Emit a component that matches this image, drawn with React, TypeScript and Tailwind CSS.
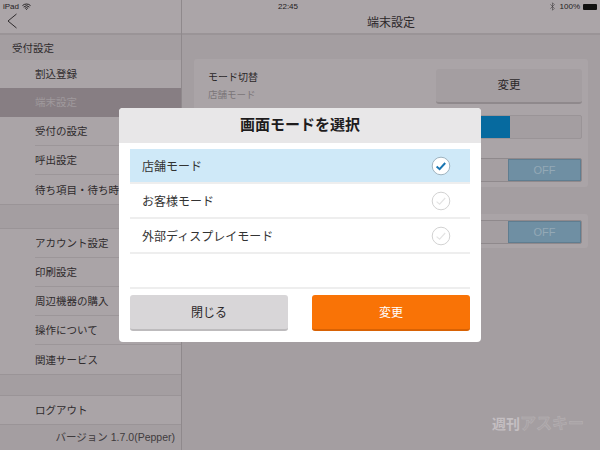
import React from 'react';
import { Bluetooth, Wifi } from 'lucide-react';

const FONT = "font-['Liberation_Sans','Noto_Sans_CJK_JP',sans-serif]";

const SideItem = ({ label, active, last, short }: { label: string; active?: boolean; last?: boolean; short?: boolean }) => (
  <div className={`${short ? 'h-[28px]' : 'h-[29px]'} shrink-0 pl-[35px] ${active ? 'bg-[#877e83]' : ''}`}>
    <div className={`h-full pt-[2px] flex items-center ${last ? '' : 'border-b border-[#9c9699]'} ${active ? 'text-[#9f999c] border-transparent' : 'text-[#2f2b2d]'}`}>
      {label}
    </div>
  </div>
);

const Sidebar = () => (
  <aside className="w-[182px] shrink-0 flex flex-col border-r border-[#8f898c] bg-[#aaa4a7] text-[10.5px] whitespace-nowrap overflow-hidden">
    <div className="h-[35px] shrink-0 bg-[#aba5a8] border-b-2 border-[#9a9497]" />
    <div className="h-[25px] shrink-0 pl-[12px] pt-[2px] flex items-center bg-[#a49ea1] text-[#2f2b2d]">受付設定</div>
    <SideItem label="割込登録" last short />
    <SideItem label="端末設定" active />
    <SideItem label="受付の設定" />
    <SideItem label="呼出設定" />
    <SideItem label="待ち項目・待ち時間設定" last />
    <div className="h-[25px] shrink-0 bg-[#a49ea1] border-y border-[#9a9497]" />
    <SideItem label="アカウント設定" />
    <SideItem label="印刷設定" />
    <SideItem label="周辺機器の購入" />
    <SideItem label="操作について" />
    <SideItem label="関連サービス" last />
    <div className="h-[22px] shrink-0 bg-[#a49ea1] border-y border-[#9a9497]" />
    <SideItem label="ログアウト" last short />
    <div className="flex-1 flex items-center justify-end pr-[6px] bg-[#a49ea1] border-t border-[#9a9497] text-[#3f3b3d]">
      バージョン 1.7.0(Pepper)
    </div>
  </aside>
);

const OffToggle = () => (
  <div className="h-[24px] ml-auto w-[180px] flex rounded-[2px] overflow-hidden border border-[#8f898c]">
    <div className="flex-1 bg-[#a49ea1]" />
    <div className="w-[73px] bg-[#6f8fa3] border border-[#5f7d90] flex items-center justify-center text-[11px] text-[#94a9b6]">OFF</div>
  </div>
);

const Settings = () => (
  <main className="flex-1 flex flex-col bg-[#a49ea1] min-w-0">
    <div className="h-[35px] shrink-0 pt-[12px] bg-[#aba5a8] border-b-2 border-[#9a9497] flex items-center justify-center text-[12px] text-[#2b2729]">
      端末設定
    </div>
    <div className="pl-[12px] pr-[12px] pt-[24px] flex flex-col">
      <section className="h-[128px] rounded-[3px] bg-[#aaa4a7] pt-[10px] pl-[14px] pr-[6px]">
        <div className="flex justify-between">
          <div className="text-[10px] leading-[17px]">
            <div className="text-[#2b2729]">モード切替</div>
            <div className="text-[9.5px] text-[#7a7578]">店舗モード</div>
          </div>
          <div className="w-[146px] h-[35px] rounded-[3px] bg-[#a49ea1] border-b-2 border-[#8f898c] pt-[1px] flex items-center justify-center text-[11.5px] text-[#2b2729]">
            変更
          </div>
        </div>
        <div className="mt-[11px] h-[24px] ml-auto w-[180px] flex rounded-[2px] overflow-hidden bg-[#a49ea1] border border-[#9a9497]">
          <div className="w-[107px] bg-[#066a9f]" />
        </div>
        <div className="mt-[19px]"><OffToggle /></div>
      </section>
      <section className="mt-[27px] h-[34px] rounded-[3px] bg-[#aaa4a7] pt-[6px] pr-[6px]">
        <OffToggle />
      </section>
    </div>
  </main>
);

const StatusBar = () => (
  <div className="absolute inset-x-0 top-0 h-[13px] px-[3px] flex items-center justify-between text-[8px] text-[#1f1c1e]">
    <div className="flex items-center gap-[3px]">
      <span>iPad</span>
      <Wifi size={9} strokeWidth={2.5} />
    </div>
    <span className="absolute left-[278px]">22:45</span>
    <div className="flex items-center gap-[3px]">
      <Bluetooth size={9} strokeWidth={1.5} className="text-[#3f3b3d]" />
      <span>100%</span>
      <div className="w-[14px] h-[6px] bg-[#111] rounded-[1px]" />
    </div>
  </div>
);

const Check = ({ on }: { on?: boolean }) => (
  <svg width="20" height="20" viewBox="0 0 20 20" className="shrink-0">
    <circle cx="10" cy="10" r="8.8" fill="#fff" stroke={on ? '#9fb3bf' : '#d2d2d2'} strokeWidth="1" />
    <path d="M5.6 10.6l3 2.6 5.6-6.2" fill="none" stroke={on ? '#1a76b2' : '#e4e4e4'} strokeWidth={on ? 2 : 1.2} />
  </svg>
);

const ModeRow = ({ label, on }: { label: string; on?: boolean }) => (
  <div className={`h-[35px] pl-[12px] pr-[19px] flex items-center justify-between border-b-2 border-[#eeeeee] text-[12px] text-[#333] ${on ? 'bg-[#cfe9f8]' : 'bg-white'}`}>
    <span className="pt-[2px]">{label}</span>
    <Check on={on} />
  </div>
);

const ModeDialog = () => (
  <div className="absolute left-[119px] top-[108px] w-[362px] h-[234px] rounded-[4px] overflow-hidden bg-white flex flex-col">
    <div className="h-[35px] shrink-0 bg-[#e8e7e8] flex items-center justify-center text-[15px] font-bold text-[#1e1c1d]">
      画面モードを選択
    </div>
    <div className="px-[11px] pt-[6px]">
      <ModeRow label="店舗モード" on />
      <ModeRow label="お客様モード" />
      <ModeRow label="外部ディスプレイモード" />
    </div>
    <div className="mx-[11px] h-[35px] border-b-2 border-[#eeeeee]" />
    <div className="px-[11px] pt-[6px] flex justify-between text-[12px]">
      <div className="w-[158px] h-[36px] pt-[2px] rounded-[3px] bg-[#d8d6d8] border-b-2 border-[#bdbbbd] flex items-center justify-center text-[#2b2729]">
        閉じる
      </div>
      <div className="w-[158px] h-[36px] pt-[2px] rounded-[3px] bg-[#f97306] border-b-2 border-[#d86204] flex items-center justify-center text-white">
        変更
      </div>
    </div>
  </div>
);

export default function App() {
  return (
    <div className={`relative w-[600px] h-[450px] overflow-hidden flex ${FONT}`}>
      <Sidebar />
      <Settings />
      <StatusBar />
      {/* back chevron */}
      <svg width="12" height="18" viewBox="0 0 12 18" className="absolute left-[6px] top-[12px]">
        <path d="M10.5 2L2 9l8.5 7" fill="none" stroke="#2f2b2d" strokeWidth="1" />
      </svg>
      <ModeDialog />
      {/* watermark */}
      <div className="absolute left-[492px] top-[416px] flex items-center font-bold text-[#c4bfc2] text-[14px] leading-none">
        週刊
        <span className="text-[#a9a3a6] text-[16px] [-webkit-text-stroke:0.5px_#b7b2b4]">アスキー</span>
      </div>
    </div>
  );
}
